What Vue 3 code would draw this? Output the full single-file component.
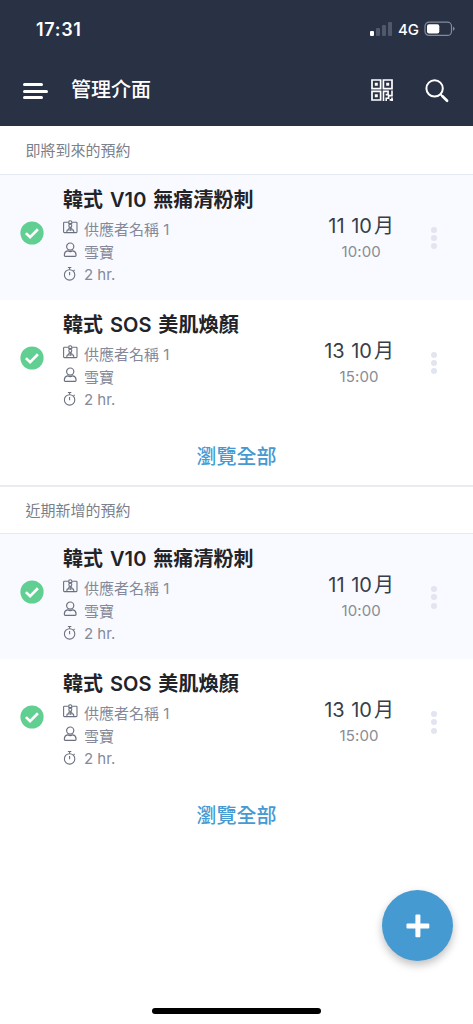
<script setup>
const items = [
  { title: '韓式 V10 無痛清粉刺', date: '11', time: '10:00' },
  { title: '韓式 SOS 美肌煥顏', date: '13', time: '15:00' },
]
const sections = [
  { name: '即將到來的預約', items },
  { name: '近期新增的預約', items },
]
</script>

<template>
  <div class="screen">
    <header>
      <div class="status">
        <span class="clock">17:31</span>
        <div class="indicators">
          <div class="signal"><i class="on"></i><i></i><i></i><i></i></div>
          <span class="network">4G</span>
          <svg width="32" height="16" viewBox="0 0 32 16">
            <rect x="1" y="1.2" width="26.5" height="13.2" rx="4" fill="none" stroke="#858b99" stroke-width="1.2" />
            <rect x="3" y="3.2" width="12.3" height="9.4" rx="2" fill="#fff" />
            <path d="M29 5.8q1.6.5 1.6 2t-1.6 2z" fill="#858b99" />
          </svg>
        </div>
      </div>
      <div class="bar">
        <div class="menu"><i></i><i></i><i></i></div>
        <h1>管理介面</h1>
        <svg class="qr" width="22" height="22" viewBox="0 0 22 22" fill="none" stroke="#fff" stroke-width="1.7">
          <path d="M1 1h8.6v8.6H1zM12.4 1H21v8.6h-8.6zM1 12.4h8.6V21H1z" />
          <path d="M3.8 3.8h3v3h-3zM15.2 3.8h3v3h-3zM3.8 15.2h3v3h-3z" fill="#fff" stroke="none" />
          <path d="M12.5 22V12.4h4.6v3.2h-2.4M21 11.6v5h-3.4v2.6h-2.4V22M18.6 20.9H22M21 18.4V22" stroke-width="1.6" />
        </svg>
        <svg class="search" width="26" height="26" viewBox="0 0 26 26" fill="none" stroke="#fff" stroke-width="2" stroke-linecap="round">
          <circle cx="10.6" cy="10.4" r="8.2" />
          <path d="M16.6 16.4l2 2" />
          <path d="M18.5 18.3l4.6 4.5" stroke-width="2.6" />
        </svg>
      </div>
    </header>

    <section v-for="section in sections" :key="section.name">
      <h2>{{ section.name }}</h2>
      <article v-for="item in section.items" :key="item.title">
        <svg class="check" width="24" height="24" viewBox="0 0 24 24">
          <circle cx="12" cy="12" r="11.6" fill="#60cf91" />
          <path d="M5.9 12.1l4.2 4.1 7.8-7.9" fill="none" stroke="#fff" stroke-width="2.7" />
        </svg>
        <div class="info">
          <h3>{{ item.title }}</h3>
          <div class="detail provider">
            <svg width="16" height="16" viewBox="0 0 16 16" fill="none" stroke="#6c717f" stroke-width="1.1">
              <path d="M5.4 2.3H1.4q-.8 0-.8.8v8.7q0 .8.8.8h11.8q.8 0 .8-.8V3.1q0-.8-.8-.8h-4" />
              <path d="M5.8 3.6V1.9q0-1.2 1.5-1.2t1.5 1.2v1.7z" />
              <circle cx="7.3" cy="5.8" r="1.5" />
              <path d="M3.9 12.4v-1.5q0-1 1-1h.9V8.6q0-1 1.5-1t1.5 1v1.3h.9q1 0 1 1v1.5M7.3 8v3" />
            </svg>
            <span>供應者名稱 1</span>
          </div>
          <div class="detail client">
            <svg width="16" height="16" viewBox="0 0 16 16" fill="none" stroke="#6c717f" stroke-width="1.2">
              <circle cx="7.2" cy="4.6" r="3.6" />
              <path d="M4.6 8.8q-3.2.8-3.2 3.6v1.1q0 .8.8.8h10q.8 0 .8-.8v-1.1q0-2.8-3.2-3.6Q7.2 10.4 4.6 8.8z" />
            </svg>
            <span>雪寶</span>
          </div>
          <div class="detail duration">
            <svg width="16" height="16" viewBox="0 0 16 16" fill="none" stroke="#6c717f" stroke-width="1.1">
              <circle cx="6.6" cy="8.9" r="5.2" />
              <path d="M6.6 3.7V1.6M4.9 1.5h3.4M6.6 6v3.3M10.6 4.9l1-1" />
            </svg>
            <span>2 hr.</span>
          </div>
        </div>
        <div class="when">
          <div class="date">{{ item.date }} 10<span>月</span></div>
          <div class="time">{{ item.time }}</div>
        </div>
        <div class="more"><i></i><i></i><i></i></div>
      </article>
      <a class="all">瀏覽全部</a>
    </section>

    <button class="add">
      <svg width="24" height="24" viewBox="0 0 24 24" fill="#fff">
        <rect x="9.4" y=".5" width="5" height="22.8" rx="1" />
        <rect x=".5" y="9.4" width="22.8" height="5" rx="1" />
      </svg>
    </button>
    <div class="home"></div>
  </div>
</template>

<style>
body { margin: 0; background: #fff; }
</style>

<style scoped>
* { box-sizing: border-box; }
.screen {
  position: relative;
  width: 473px;
  height: 1024px;
  overflow: hidden;
  background: #fff;
  font-family: Inter, "Noto Sans CJK TC", sans-serif;
}
h1, h2, h3 { margin: 0; }
header { height: 126px; background: #293145; color: #fff; }
.status { height: 58px; padding: 0 17px 0 36px; display: flex; align-items: center; justify-content: space-between; }
.clock { padding-top: 1px; font-size: 18px; font-weight: 600; line-height: 22px; letter-spacing: .7px; }
.indicators { display: flex; align-items: center; }
.signal { display: flex; align-items: flex-end; gap: 2px; height: 14px; margin-right: 6px; }
.signal i { width: 4px; height: 14px; border-radius: 1px; background: #50586b; }
.signal i:nth-child(1) { height: 5px; background: #fff; }
.signal i:nth-child(2) { height: 8px; }
.signal i:nth-child(3) { height: 11px; }
.network { width: 21px; margin-right: 5px; padding-top: 1px; font-size: 15px; font-weight: 500; line-height: 18px; }
.bar { height: 64px; padding: 0 23.5px 0 23px; display: flex; align-items: center; }
.menu { width: 25px; display: flex; flex-direction: column; gap: 3.5px; padding-top: 2px; }
.menu i { width: 20px; height: 3px; border-radius: 2px; background: #fff; }
.menu i:nth-child(2) { width: 25px; }
h1 { margin-left: 23px; font-size: 20px; font-weight: 500; line-height: 28px; }
.qr { margin-left: auto; }
.search { margin: 1px 0 0 30.5px; }
section { height: 359.3px; }
h2 {
  height: 49px;
  padding-left: 25.5px;
  border-bottom: 1px solid #e6e9f2;
  color: #7b7f8a;
  font-size: 15px;
  font-weight: 400;
  line-height: 50px;
}
section + section h2 { border-top: 2px solid #ebecf0; line-height: 47px; }
article { height: 125px; display: flex; align-items: flex-start; }
article:nth-of-type(odd) { background: #f8faff; }
.check { margin: 46px 0 0 19.5px; }
.info { width: 230px; margin-left: 19.5px; padding-top: 10px; }
h3 { color: #222329; font-size: 20px; font-weight: 600; line-height: 30px; word-spacing: 1.6px; letter-spacing: .1px; white-space: nowrap; }
.detail { display: flex; align-items: flex-start; gap: 5px; height: 24px; color: #858999; font-size: 15px; line-height: 24px; }
.detail svg { margin-top: 3px; }
.provider { padding-top: 3px; }
.provider svg { margin-top: 2px; }
.client { padding-top: 2px; }
.client svg { margin-top: 1px; }
.duration { height: 22px; }
.duration svg { margin-top: 3px; }
.when { margin-left: auto; padding-top: 37px; text-align: center; }
.date { color: #393d49; font-size: 20px; line-height: 28px; word-spacing: 1px; white-space: nowrap; }
.date span { margin-left: 2px; }
.time { color: #898c95; font-size: 15px; line-height: 24px; letter-spacing: .1px; }
.more { margin: 52px 36px 0 37px; display: flex; flex-direction: column; gap: 2.2px; }
.more i { width: 6px; height: 6px; border-radius: 50%; background: #e2e5f0; }
.all { display: block; padding-top: 2px; color: #469ad2; font-size: 20px; font-weight: 500; line-height: 60px; text-align: center; }
.add {
  position: absolute;
  left: 382px;
  top: 890px;
  width: 71px;
  height: 71px;
  padding: 0;
  border: 0;
  border-radius: 50%;
  display: grid;
  place-items: center;
  background: #469ad2;
  box-shadow: 0 4px 9px rgb(0 0 0 / 25%);
}
.home { position: absolute; left: 152px; top: 1008px; width: 169px; height: 6px; border-radius: 3px; background: #000; }
</style>
